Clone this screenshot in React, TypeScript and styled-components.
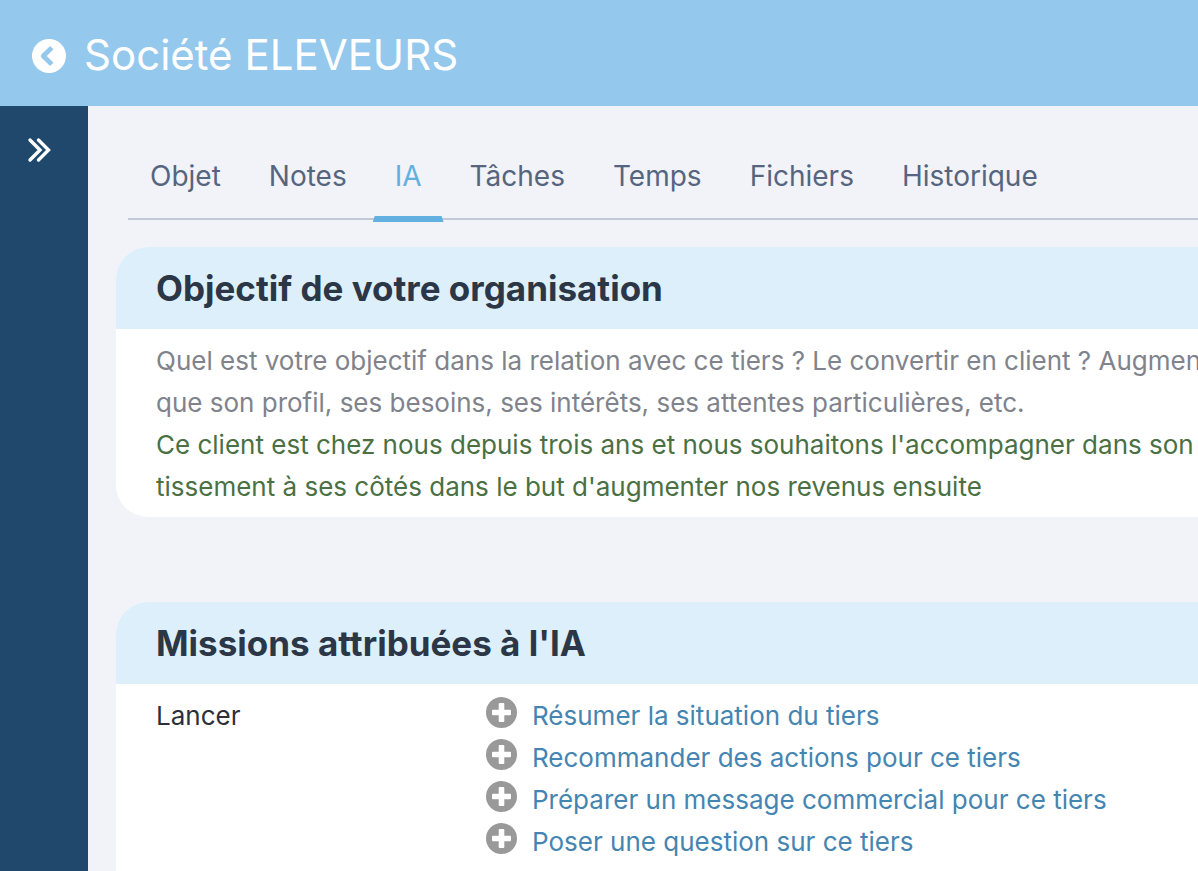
import React from 'react';
import styled, { createGlobalStyle } from 'styled-components';

const GlobalStyle = createGlobalStyle`
  * { box-sizing: border-box; }
  body {
    margin: 0;
    background: #f1f3f8;
    font-family: Inter, "Open Sans", sans-serif;
    color: #2b3746;
    overflow: hidden;
  }
`;

const Page = styled.div`
  display: flex;
  flex-direction: column;
  height: 100vh;
`;

const Header = styled.header`
  display: flex;
  flex: none;
  align-items: center;
  gap: 18px;
  height: 106px;
  padding: 6px 32px 0;
  background: #95c8ed;
  color: #fff;
`;

const IconButton = styled.button`
  display: flex;
  padding: 0;
  border: 0;
  background: none;
  color: #fff;
  cursor: pointer;
`;

const Title = styled.h1`
  margin: 0;
  padding-bottom: 2px;
  font-size: 42px;
  line-height: 60px;
  font-weight: 400;
  white-space: nowrap;
`;

const Body = styled.div`
  display: flex;
  flex: 1;
  min-height: 0;
`;

const Sidebar = styled.nav`
  flex: none;
  width: 88px;
  padding: 30px 26px;
  background: #20486d;
`;

const Main = styled.main`
  flex: 1;
  min-width: 0;
  padding: 28px 0 0 28px;
  overflow: hidden;
`;

const Tabs = styled.nav`
  display: flex;
  height: 86px;
  margin-left: 12px;
  border-bottom: 2px solid #c3c8d6;
`;

const Tab = styled.a<{ $active?: boolean }>`
  position: relative;
  padding: 22px 22px 0;
  margin-right: 4px;
  font-size: 28px;
  line-height: 40px;
  color: ${(p) => (p.$active ? '#62b0e0' : '#56657f')};
  text-decoration: none;
  white-space: nowrap;

  &::after {
    content: '';
    display: ${(p) => (p.$active ? 'block' : 'none')};
    position: absolute;
    left: 0;
    right: 0;
    bottom: -4px;
    height: 6px;
    background: #62b0e0;
    clip-path: polygon(2px 0, calc(100% - 2px) 0, 100% 100%, 0 100%);
  }
`;

const Card = styled.section<{ $tall?: boolean }>`
  margin: 27px 0 85px;
  padding-bottom: ${(p) => (p.$tall ? '80px' : '0')};
  border-radius: 32px 0 0 32px;
  background: #fff;
  overflow: hidden;
`;

const CardTitle = styled.h2`
  margin: 0;
  padding: 17px 40px;
  background: #deeffc;
  font-size: 35px;
  line-height: 48px;
  font-weight: 700;
  white-space: nowrap;
`;

const CardBody = styled.div`
  display: flex;
  flex-direction: column;
  padding: 11px 0 9px 40px;
  font-size: 26px;
  line-height: 42px;
  white-space: nowrap;
`;

const Hint = styled.p`
  margin: 0;
  color: #80838c;
`;

const Goal = styled.p`
  margin: 0;
  color: #4a7044;
`;

const MissionRow = styled.div`
  display: flex;
`;

const RowLabel = styled.span`
  flex: none;
  width: 330px;
  color: #2c3039;
`;

const MissionList = styled.ul`
  margin: 0;
  padding: 0;
  list-style: none;
`;

const Mission = styled.li`
  display: flex;
  gap: 15px;
`;

const MissionIcon = styled.svg`
  flex: none;
  margin-top: 2px;
`;

const MissionLink = styled.a`
  color: #4585b1;
  text-decoration: none;
`;

const tabs = ['Objet', 'Notes', 'IA', 'Tâches', 'Temps', 'Fichiers', 'Historique'];

const missions = [
  'Résumer la situation du tiers',
  'Recommander des actions pour ce tiers',
  'Préparer un message commercial pour ce tiers',
  'Poser une question sur ce tiers',
];

export default function App() {
  return (
    <>
      <GlobalStyle />
      <Page>
        <Header>
          <IconButton aria-label="Retour">
            <svg width="34" height="34" viewBox="0 0 34 34">
              <circle cx="17" cy="17" r="17" fill="#fff" />
              <path
                d="M19.8 8.6L11.3 17l8.5 8.4"
                fill="none"
                stroke="#95c8ed"
                strokeWidth="4.8"
                strokeLinejoin="round"
              />
            </svg>
          </IconButton>
          <Title>Société ELEVEURS</Title>
        </Header>
        <Body>
          <Sidebar>
            <IconButton aria-label="Ouvrir le menu">
              <svg
                width="28"
                height="28"
                viewBox="0 0 28 28"
                fill="none"
                stroke="currentColor"
                strokeWidth="3.4"
                strokeLinecap="round"
              >
                <path d="M4 4l10 10L4 24M12.500 4l10 10-10 10" />
              </svg>
            </IconButton>
          </Sidebar>
          <Main>
            <Tabs>
              {tabs.map((tab) => (
                <Tab key={tab} href="#" $active={tab === 'IA'}>
                  {tab}
                </Tab>
              ))}
            </Tabs>
            <Card>
              <CardTitle>Objectif de votre organisation</CardTitle>
              <CardBody>
                <Hint>
                  Quel est votre objectif dans la relation avec ce tiers ? Le convertir en client ? Augmen
                  <br />
                  que son profil, ses besoins, ses intérêts, ses attentes particulières, etc.
                </Hint>
                <Goal>
                  Ce client est chez nous depuis trois ans et nous souhaitons l'accompagner dans son
                  <br />
                  tissement à ses côtés dans le but d'augmenter nos revenus ensuite
                </Goal>
              </CardBody>
            </Card>
            <Card $tall>
              <CardTitle>Missions attribuées à l'IA</CardTitle>
              <CardBody>
                <MissionRow>
                  <RowLabel>Lancer</RowLabel>
                  <MissionList>
                    {missions.map((mission) => (
                      <Mission key={mission}>
                        <MissionIcon width="31" height="31" viewBox="0 0 31 31" aria-hidden="true">
                          <circle cx="15.5" cy="15.5" r="15.5" fill="#999" />
                          <rect x="6" y="12.700" width="19" height="5.600" rx="1" fill="#fff" />
                          <rect x="12.700" y="6" width="5.600" height="19" rx="1" fill="#fff" />
                        </MissionIcon>
                        <MissionLink href="#">{mission}</MissionLink>
                      </Mission>
                    ))}
                  </MissionList>
                </MissionRow>
              </CardBody>
            </Card>
          </Main>
        </Body>
      </Page>
    </>
  );
}
